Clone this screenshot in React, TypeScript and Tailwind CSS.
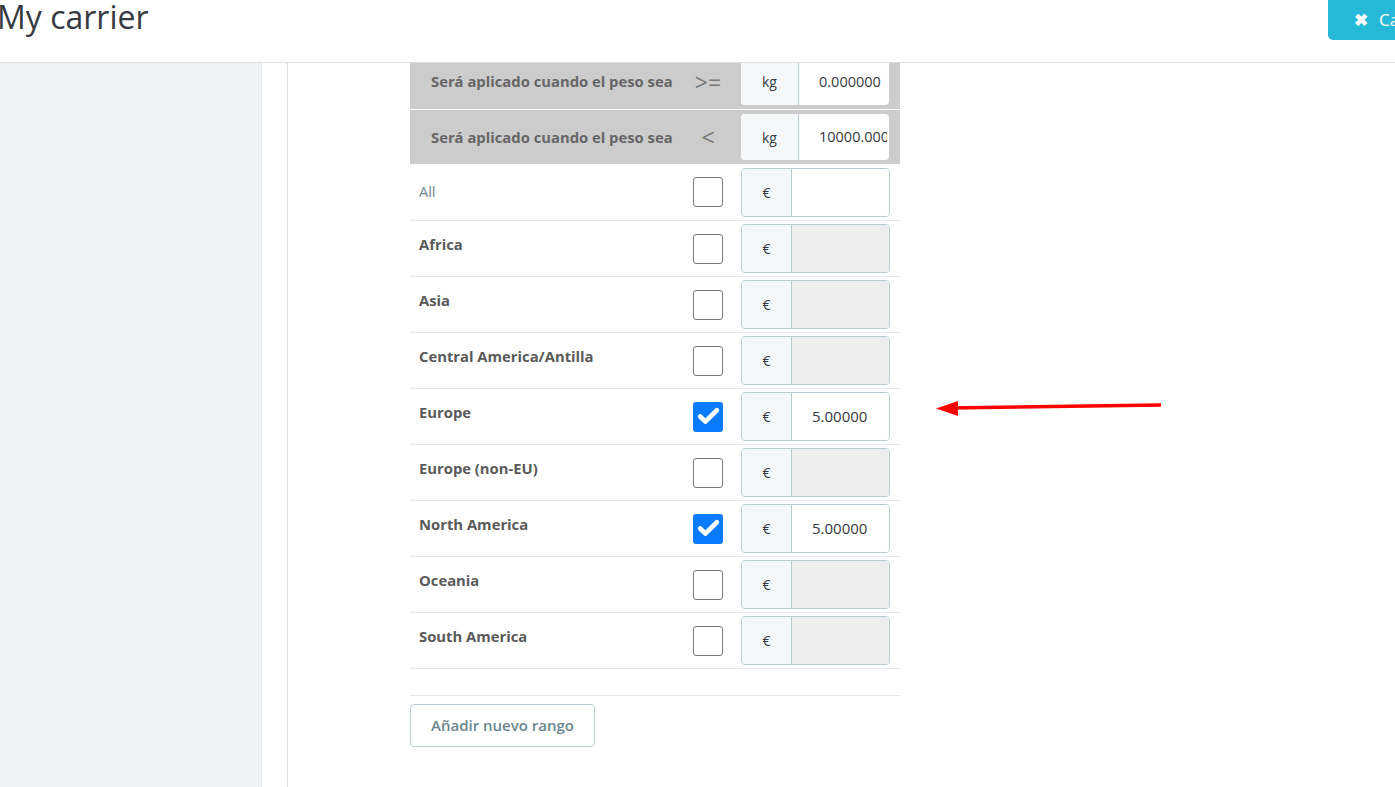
import { Check } from "lucide-react";

const zones = [
  { name: "Africa", checked: false },
  { name: "Asia", checked: false },
  { name: "Central America/Antilla", checked: false },
  { name: "Europe", checked: true },
  { name: "Europe (non-EU)", checked: false },
  { name: "North America", checked: true },
  { name: "Oceania", checked: false },
  { name: "South America", checked: false },
];

function Checkbox({ checked }: { checked: boolean }) {
  if (checked) {
    return (
      <div className="w-[30px] h-[30px] rounded-[3px] bg-[#0a7bff] flex items-center justify-center">
        <Check className="w-[25px] h-[25px] text-white" strokeWidth={4.5} />
      </div>
    );
  }
  return <div className="w-[30px] h-[30px] rounded-[3px] border border-[#7a7a7a] bg-white" />;
}

function PriceInput({ value, disabled }: { value?: string; disabled?: boolean }) {
  return (
    <div className="flex h-[49px] w-[149px] rounded-[4px] border border-[#bbcdd2] overflow-hidden">
      <div className="w-[50px] bg-[#f5f8f9] border-r border-[#bbcdd2] flex items-center justify-center text-[14px] text-[#363a41]">
        €
      </div>
      <div
        className={`flex-1 flex items-center px-[20px] text-[15px] text-[#363a41] ${
          disabled ? "bg-[#eeeeee]" : "bg-white"
        }`}
      >
        {value}
      </div>
    </div>
  );
}

function WeightRow({ op, value, first }: { op: string; value: string; first?: boolean }) {
  return (
    <div className={`bg-[#cccccc] overflow-hidden ${first ? "h-[46px]" : "h-[54px] mt-[1px]"}`}>
      <div className={`flex items-center ${first ? "h-[55px] -mt-[9px]" : "h-[54px]"}`}>
        <span className="pl-[21px] w-[270px] text-[14.8px] font-bold text-[#666666] whitespace-nowrap">
          Será aplicado cuando el peso sea
        </span>
        <span className="w-[56px] text-center text-[23px] leading-[28px] text-[#777777]">{op}</span>
        <div className="flex h-[46px] w-[148px] ml-[5px] rounded-[4px] overflow-hidden bg-white">
          <div className="w-[58px] shrink-0 bg-[#f5f8f9] border-r border-[#bbcdd2] flex items-center justify-center text-[14px] text-[#363a41]">
            kg
          </div>
          <div className="w-[68px] shrink-0 ml-[20px] flex items-center text-[14.5px] text-[#363a41] overflow-hidden whitespace-nowrap">
            {value}
          </div>
        </div>
      </div>
    </div>
  );
}

export default function App() {
  return (
    <div className="relative w-[1395px] h-[787px] overflow-hidden bg-white font-['Open_Sans',sans-serif]">
      <header className="h-[63px] border-b border-[#dddddd] flex items-start justify-between">
        <h1 className="ml-[-3px] mt-[-3px] text-[32px] text-[#363a41] leading-[40px]">My carrier</h1>
        <button className="h-[40px] w-[67px] bg-[#25b9d7] rounded-bl-[5px] flex items-center pl-[26px] text-white text-[17px] overflow-hidden whitespace-nowrap">
          <span className="text-[17px] font-bold mr-[11px]">✖</span>
          <span>Ca</span>
        </button>
      </header>

      <div className="flex h-[724px]">
        <aside className="w-[262px] bg-[#eff1f2] border-r border-[#e3e6e8]" />
        <div className="w-[25px]" />
        <main className="flex-1 border-l border-[#dddddd] pl-[122px]">
          <div className="w-[490px]">
            <WeightRow op=">=" value="0.000000" first />
            <WeightRow op="<" value="10000.000000" />

            <div className="flex items-center h-[57px] border-b border-[#e5e8ea]">
              <span className="pl-[9px] w-[283px] text-[14.5px] text-[#6c868e]">All</span>
              <div className="w-[48px]">
                <Checkbox checked={false} />
              </div>
              <PriceInput />
            </div>

            {zones.map((z) => (
              <div key={z.name} className="flex items-center h-[56px] border-b border-[#e5e8ea]">
                <span className="pl-[9px] w-[283px] self-start pt-[12px] text-[14.8px] font-bold text-[#5a5a5a]">
                  {z.name}
                </span>
                <div className="w-[48px]">
                  <Checkbox checked={z.checked} />
                </div>
                <PriceInput value={z.checked ? "5.00000" : ""} disabled={!z.checked} />
              </div>
            ))}

            <div className="h-[27px] border-b border-[#e5e8ea]" />
            <button className="mt-[8px] h-[43px] w-[185px] rounded-[4px] border border-[#bbcdd2] text-[15px] font-semibold text-[#6c868e]">
              Añadir nuevo rango
            </button>
          </div>
        </main>
      </div>

      <svg className="absolute left-[930px] top-[395px]" width="240" height="25" viewBox="0 0 240 25">
        <line x1="231" y1="10" x2="20" y2="13" stroke="#ff0000" strokeWidth="3.5" />
        <polygon points="6,13.5 28,6 28,21" fill="#ff0000" />
      </svg>
    </div>
  );
}
